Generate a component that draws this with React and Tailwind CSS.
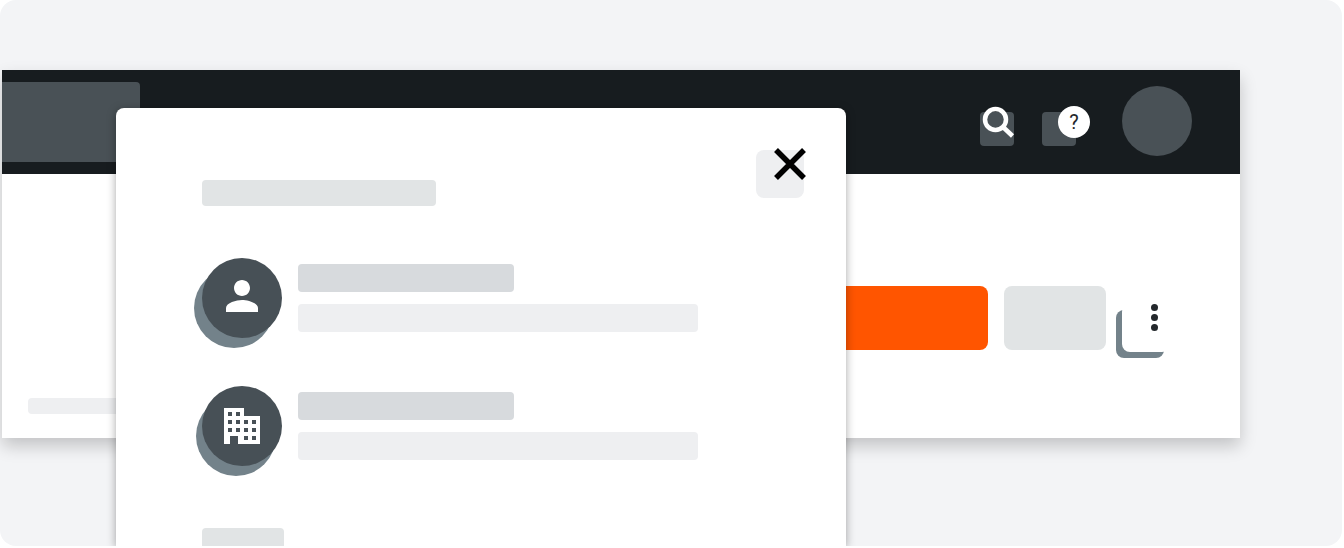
import React from 'react';

function PersonIcon() {
  return (
    <svg className="-mt-1" width="48" height="48" viewBox="0 0 24 24" fill="#ffffff">
      <path d="M12 12c2.21 0 4-1.79 4-4s-1.79-4-4-4-4 1.79-4 4 1.79 4 4 4zm0 2c-2.67 0-8 1.34-8 4v2h16v-2c0-2.66-5.33-4-8-4z" />
    </svg>
  );
}

function BuildingIcon() {
  const windows = [
    [4, 4], [12, 4],
    [4, 12], [12, 12], [20, 12], [28, 12],
    [4, 20], [12, 20], [20, 20], [28, 20],
    [20, 28], [28, 28],
  ];
  return (
    <svg width="36" height="36" viewBox="0 0 36 36">
      <path d="M0 0H20V8H36V36H14V28H6V36H0Z" fill="#ffffff" />
      {windows.map(([x, y]) => (
        <rect key={`${x}-${y}`} x={x} y={y} width="4" height="4" fill="#475056" />
      ))}
    </svg>
  );
}

function SearchIcon() {
  return (
    <svg width="36" height="36" viewBox="0 0 36 36" fill="none" stroke="#ffffff">
      <circle cx="16.5" cy="13.5" r="10.5" strokeWidth="4.5" />
      <path d="M24.5 21.5L33.5 30" strokeWidth="4.5" />
    </svg>
  );
}

function CloseIcon() {
  return (
    <svg width="32" height="32" viewBox="0 0 32 32" fill="none" stroke="#000000" strokeWidth="5.5">
      <path d="M2 2L30 30M30 2L2 30" />
    </svg>
  );
}

function OptionRow({ icon, shadow }) {
  return (
    <div className="flex gap-4">
      <div className={`flex h-20 w-20 shrink-0 items-center justify-center rounded-full bg-[#475056] ${shadow}`}>
        {icon}
      </div>
      <div className="flex flex-col gap-3 pt-1.5">
        <div className="h-7 w-[216px] rounded bg-[#d7dadd]" />
        <div className="h-7 w-[400px] rounded bg-[#eeeff1]" />
      </div>
    </div>
  );
}

export default function App() {
  return (
    <div className="h-[548px] w-[1344px] overflow-hidden bg-white">
      <div className="relative h-[546px] w-[1342px] overflow-hidden rounded-2xl bg-[#f3f4f6] pl-0.5 pt-[70px]">
        {/* Window behind the dialog */}
        <div className="w-[1238px] bg-white shadow-[0_8px_16px_rgba(0,0,0,0.2)]">
          <div className="flex h-[104px] items-start justify-between bg-[#171c1f] pr-12 pt-3">
            <div className="h-20 w-[138px] rounded-r bg-[#495156]" />
            <div className="flex items-start">
              <div className="relative mt-[30px] h-[34px] w-[34px] rounded bg-[#495156]">
                <div className="absolute -top-[6px] left-[-1px]">
                  <SearchIcon />
                </div>
              </div>
              <div className="relative ml-7 mt-[30px] h-[34px] w-[34px] rounded bg-[#495156]">
                <div className="absolute -top-[6px] left-4 flex h-8 w-8 items-center justify-center rounded-full bg-white font-['Roboto',sans-serif] text-[20px] font-normal text-[#23282c]">
                  ?
                </div>
              </div>
              <div className="ml-[46px] mt-1 h-[70px] w-[70px] rounded-full bg-[#495156]" />
            </div>
          </div>
          <div className="flex h-[264px] justify-between pr-[70px]">
            <div className="ml-[26px] mt-[224px] h-4 w-[200px] rounded bg-[#eeeff1]" />
            <div className="flex items-start gap-4 pt-28">
              <div className="h-16 w-[260px] rounded-lg bg-[#ff5500]" />
              <div className="h-16 w-[102px] rounded-lg bg-[#e1e4e5]" />
              <div className="mt-[18px] flex h-12 w-12 flex-col items-center gap-[3px] rounded-lg bg-white pl-4 shadow-[-6px_6px_0_0_#73828a]">
                <div className="h-[7px] w-[7px] rounded-full bg-[#23282c]" />
                <div className="h-[7px] w-[7px] rounded-full bg-[#23282c]" />
                <div className="h-[7px] w-[7px] rounded-full bg-[#23282c]" />
              </div>
            </div>
          </div>
        </div>

        {/* Dialog */}
        <div className="absolute left-[116px] top-[108px] h-[438px] w-[730px] rounded-t-lg bg-white pl-[86px] pt-[72px] shadow-[0_2px_10px_rgba(0,0,0,0.35)]">
          <div className="h-[26px] w-[234px] rounded bg-[#e1e4e5]" />
          <div className="absolute left-[640px] top-[42px] h-12 w-12 rounded-lg bg-[#eeeff1]">
            <div className="absolute -top-[2px] left-[18px]">
              <CloseIcon />
            </div>
          </div>
          <div className="mt-[52px] flex flex-col gap-12">
            <OptionRow icon={<PersonIcon />} shadow="shadow-[-8px_10px_0_0_#73828a]" />
            <OptionRow icon={<BuildingIcon />} shadow="shadow-[-6px_10px_0_0_#73828a]" />
          </div>
          <div className="mt-[62px] h-6 w-[82px] rounded bg-[#e1e4e5]" />
        </div>
      </div>
    </div>
  );
}
